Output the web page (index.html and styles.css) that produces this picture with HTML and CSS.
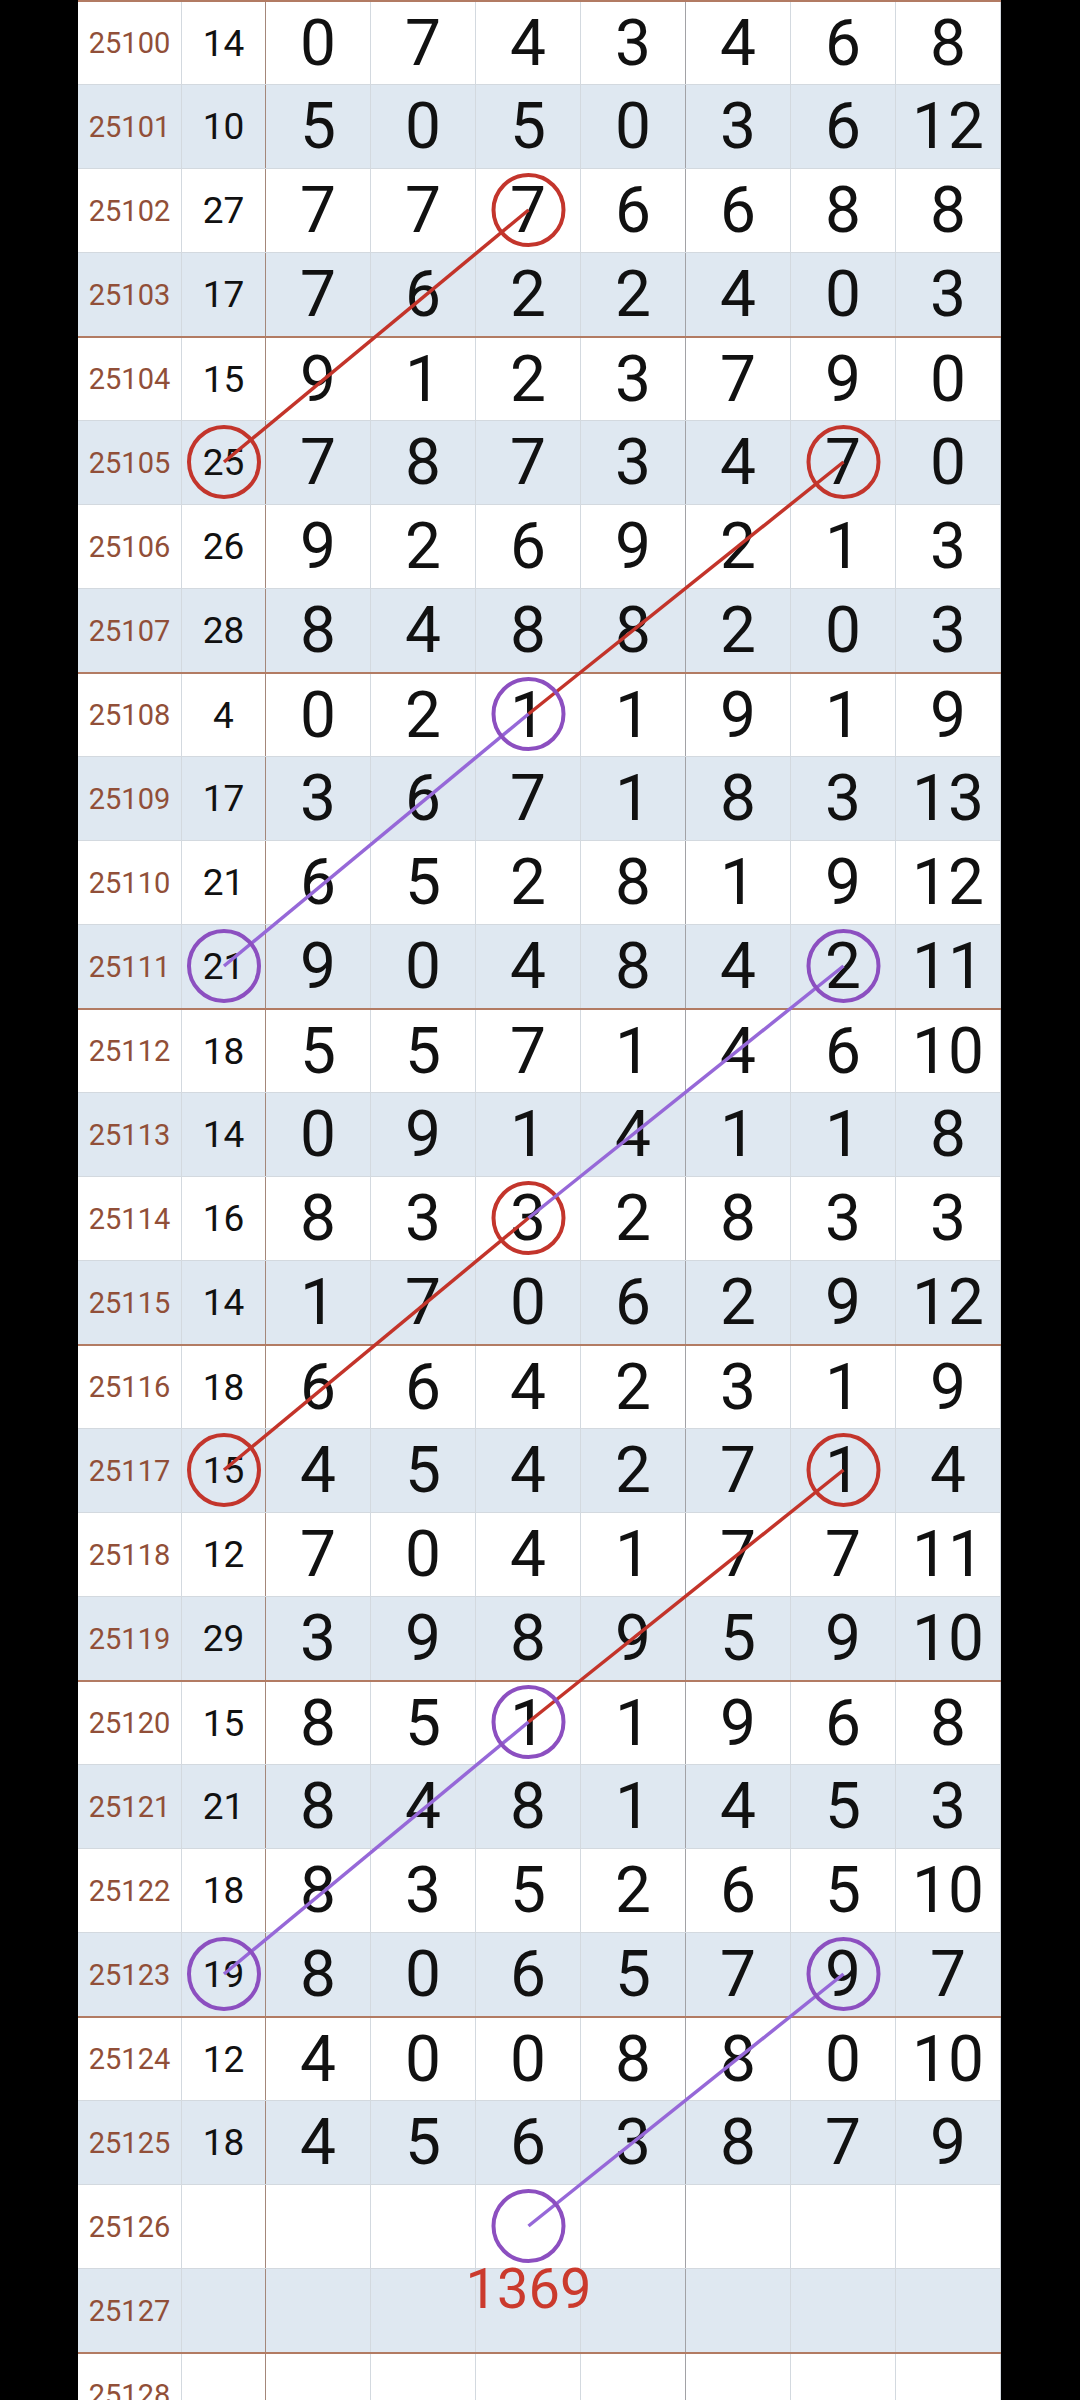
FILE: index.html
```html
<!DOCTYPE html>
<html>
<head>
    <title>Trend Chart</title>
    <link rel="stylesheet" href="styles.css">
</head>
<body>
    <div class="sheet">
        <div class="row group"><span class="no">25100</span><span class="sum">14</span><span class="d">0</span><span class="d">7</span><span class="d">4</span><span class="d split">3</span><span class="d">4</span><span class="d">6</span><span class="d">8</span></div>
        <div class="row"><span class="no">25101</span><span class="sum">10</span><span class="d">5</span><span class="d">0</span><span class="d">5</span><span class="d split">0</span><span class="d">3</span><span class="d">6</span><span class="d">12</span></div>
        <div class="row"><span class="no">25102</span><span class="sum">27</span><span class="d">7</span><span class="d">7</span><span class="d">7</span><span class="d split">6</span><span class="d">6</span><span class="d">8</span><span class="d">8</span></div>
        <div class="row"><span class="no">25103</span><span class="sum">17</span><span class="d">7</span><span class="d">6</span><span class="d">2</span><span class="d split">2</span><span class="d">4</span><span class="d">0</span><span class="d">3</span></div>
        <div class="row group"><span class="no">25104</span><span class="sum">15</span><span class="d">9</span><span class="d">1</span><span class="d">2</span><span class="d split">3</span><span class="d">7</span><span class="d">9</span><span class="d">0</span></div>
        <div class="row"><span class="no">25105</span><span class="sum">25</span><span class="d">7</span><span class="d">8</span><span class="d">7</span><span class="d split">3</span><span class="d">4</span><span class="d">7</span><span class="d">0</span></div>
        <div class="row"><span class="no">25106</span><span class="sum">26</span><span class="d">9</span><span class="d">2</span><span class="d">6</span><span class="d split">9</span><span class="d">2</span><span class="d">1</span><span class="d">3</span></div>
        <div class="row"><span class="no">25107</span><span class="sum">28</span><span class="d">8</span><span class="d">4</span><span class="d">8</span><span class="d split">8</span><span class="d">2</span><span class="d">0</span><span class="d">3</span></div>
        <div class="row group"><span class="no">25108</span><span class="sum">4</span><span class="d">0</span><span class="d">2</span><span class="d">1</span><span class="d split">1</span><span class="d">9</span><span class="d">1</span><span class="d">9</span></div>
        <div class="row"><span class="no">25109</span><span class="sum">17</span><span class="d">3</span><span class="d">6</span><span class="d">7</span><span class="d split">1</span><span class="d">8</span><span class="d">3</span><span class="d">13</span></div>
        <div class="row"><span class="no">25110</span><span class="sum">21</span><span class="d">6</span><span class="d">5</span><span class="d">2</span><span class="d split">8</span><span class="d">1</span><span class="d">9</span><span class="d">12</span></div>
        <div class="row"><span class="no">25111</span><span class="sum">21</span><span class="d">9</span><span class="d">0</span><span class="d">4</span><span class="d split">8</span><span class="d">4</span><span class="d">2</span><span class="d">11</span></div>
        <div class="row group"><span class="no">25112</span><span class="sum">18</span><span class="d">5</span><span class="d">5</span><span class="d">7</span><span class="d split">1</span><span class="d">4</span><span class="d">6</span><span class="d">10</span></div>
        <div class="row"><span class="no">25113</span><span class="sum">14</span><span class="d">0</span><span class="d">9</span><span class="d">1</span><span class="d split">4</span><span class="d">1</span><span class="d">1</span><span class="d">8</span></div>
        <div class="row"><span class="no">25114</span><span class="sum">16</span><span class="d">8</span><span class="d">3</span><span class="d">3</span><span class="d split">2</span><span class="d">8</span><span class="d">3</span><span class="d">3</span></div>
        <div class="row"><span class="no">25115</span><span class="sum">14</span><span class="d">1</span><span class="d">7</span><span class="d">0</span><span class="d split">6</span><span class="d">2</span><span class="d">9</span><span class="d">12</span></div>
        <div class="row group"><span class="no">25116</span><span class="sum">18</span><span class="d">6</span><span class="d">6</span><span class="d">4</span><span class="d split">2</span><span class="d">3</span><span class="d">1</span><span class="d">9</span></div>
        <div class="row"><span class="no">25117</span><span class="sum">15</span><span class="d">4</span><span class="d">5</span><span class="d">4</span><span class="d split">2</span><span class="d">7</span><span class="d">1</span><span class="d">4</span></div>
        <div class="row"><span class="no">25118</span><span class="sum">12</span><span class="d">7</span><span class="d">0</span><span class="d">4</span><span class="d split">1</span><span class="d">7</span><span class="d">7</span><span class="d">11</span></div>
        <div class="row"><span class="no">25119</span><span class="sum">29</span><span class="d">3</span><span class="d">9</span><span class="d">8</span><span class="d split">9</span><span class="d">5</span><span class="d">9</span><span class="d">10</span></div>
        <div class="row group"><span class="no">25120</span><span class="sum">15</span><span class="d">8</span><span class="d">5</span><span class="d">1</span><span class="d split">1</span><span class="d">9</span><span class="d">6</span><span class="d">8</span></div>
        <div class="row"><span class="no">25121</span><span class="sum">21</span><span class="d">8</span><span class="d">4</span><span class="d">8</span><span class="d split">1</span><span class="d">4</span><span class="d">5</span><span class="d">3</span></div>
        <div class="row"><span class="no">25122</span><span class="sum">18</span><span class="d">8</span><span class="d">3</span><span class="d">5</span><span class="d split">2</span><span class="d">6</span><span class="d">5</span><span class="d">10</span></div>
        <div class="row"><span class="no">25123</span><span class="sum">19</span><span class="d">8</span><span class="d">0</span><span class="d">6</span><span class="d split">5</span><span class="d">7</span><span class="d">9</span><span class="d">7</span></div>
        <div class="row group"><span class="no">25124</span><span class="sum">12</span><span class="d">4</span><span class="d">0</span><span class="d">0</span><span class="d split">8</span><span class="d">8</span><span class="d">0</span><span class="d">10</span></div>
        <div class="row"><span class="no">25125</span><span class="sum">18</span><span class="d">4</span><span class="d">5</span><span class="d">6</span><span class="d split">3</span><span class="d">8</span><span class="d">7</span><span class="d">9</span></div>
        <div class="row"><span class="no">25126</span><span class="sum"></span><span class="d"></span><span class="d"></span><span class="d"></span><span class="d split"></span><span class="d"></span><span class="d"></span><span class="d"></span></div>
        <div class="row"><span class="no">25127</span><span class="sum"></span><span class="d"></span><span class="d"></span><span class="d"></span><span class="d split"></span><span class="d"></span><span class="d"></span><span class="d"></span></div>
        <div class="row group"><span class="no">25128</span><span class="sum"></span><span class="d"></span><span class="d"></span><span class="d"></span><span class="d split"></span><span class="d"></span><span class="d"></span><span class="d"></span></div>

        <!-- trend marks drawn over the grid -->
        <svg class="marks" width="923" height="2436" viewBox="0 0 923 2436">
            <g class="red">
                <line x1="450.5" y1="210" x2="146" y2="462"/>
                <line x1="765.5" y1="462" x2="450.5" y2="714"/>
                <line x1="450.5" y1="1218" x2="146" y2="1470"/>
                <line x1="765.5" y1="1470" x2="450.5" y2="1722"/>
                <circle cx="450.5" cy="210" r="35"/>
                <circle cx="146" cy="462" r="35"/>
                <circle cx="765.5" cy="462" r="35"/>
                <circle cx="450.5" cy="1218" r="35"/>
                <circle cx="146" cy="1470" r="35"/>
                <circle cx="765.5" cy="1470" r="35"/>
            </g>
            <g class="purple">
                <line x1="450.5" y1="714" x2="146" y2="966"/>
                <line x1="765.5" y1="966" x2="450.5" y2="1218"/>
                <line x1="450.5" y1="1722" x2="146" y2="1974"/>
                <line x1="765.5" y1="1974" x2="450.5" y2="2226"/>
                <circle cx="450.5" cy="714" r="35"/>
                <circle cx="146" cy="966" r="35"/>
                <circle cx="765.5" cy="966" r="35"/>
                <circle cx="450.5" cy="1722" r="35"/>
                <circle cx="146" cy="1974" r="35"/>
                <circle cx="765.5" cy="1974" r="35"/>
                <circle cx="450.5" cy="2226" r="35"/>
            </g>
            <text class="guess" x="450.5" y="2308">1369</text>
        </svg>
    </div>
</body>
</html>
```

FILE: styles.css
```css
html, body {
    margin: 0;
    height: 2400px;
    overflow: hidden;
    background: #000;
}

body {
    font-family: Roboto, "Noto Sans", sans-serif;
}

.sheet {
    position: relative;
    width: 923px;
    margin-left: 78px;
    background: #fff;
}

.row {
    display: flex;
    height: 84px;
    box-sizing: border-box;
    border-top: 1px solid #d3d9df;
}

.row:nth-child(even) {
    background: #dfe8f1;
}

.row.group {
    border-top: 2px solid #b27b63;
}

.row span {
    display: flex;
    align-items: center;
    justify-content: center;
    box-sizing: border-box;
    border-right: 1px solid #d3d9df;
}

.no {
    width: 104px;
    font-size: 29px;
    color: #914f38;
}

.sum {
    width: 84px;
    font-size: 37px;
    color: #111;
    border-right-color: #a4877a !important;
}

.d {
    width: 105px;
    font-size: 64px;
    color: #111;
}

.d.split {
    border-right-color: #a2a2a6 !important;
}

.marks {
    position: absolute;
    top: 0;
    left: 0;
    pointer-events: none;
}

.marks line {
    stroke-width: 3.5;
}

.marks circle {
    fill: none;
    stroke-width: 4;
}

.red line {
    stroke: #c3342a;
}

.red circle {
    stroke: #c3352c;
}

.purple line {
    stroke: #9668d8;
}

.purple circle {
    stroke: #8c4fc0;
}

.guess {
    font-family: Roboto, "Noto Sans", sans-serif;
    font-size: 56px;
    fill: #cb3a2d;
    text-anchor: middle;
}
```
